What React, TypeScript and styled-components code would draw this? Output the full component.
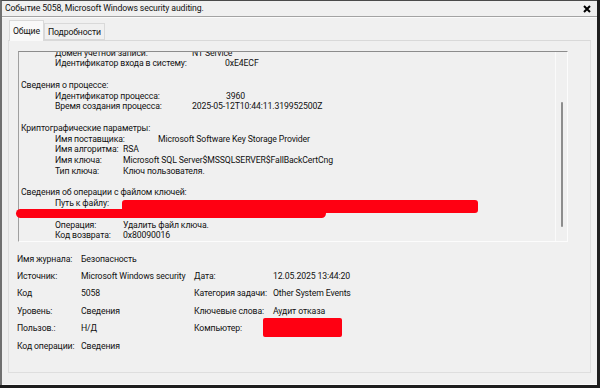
import React from "react";
import styled, { createGlobalStyle } from "styled-components";

const GlobalStyle = createGlobalStyle`
	html, body {
		margin: 0;
		padding: 0;
		background: #1e1e1e;
		overflow: hidden;
	}
	body {
		font-family: Roboto, "Noto Sans", "DejaVu Sans", sans-serif;
		font-size: 8.7px;
		letter-spacing: -0.12px;
		color: #111;
	}
`;

interface ItemProps {
	labelWidth?: number;
}

interface TabProps {
	active?: boolean;
}

interface MarkProps {
	x: number;
	y: number;
	w: number;
	h: number;
	r?: number;
}

// event log text inside the scrolling box
const logSections = [
	{
		title: "",
		items: [
			{ label: "Домен учетной записи:", value: "NT Service", width: 137 },
			{ label: "Идентификатор входа в систему:", value: "0xE4ECF", width: 170 },
		],
	},
	{
		title: "Сведения о процессе:",
		items: [
			{ label: "Идентификатор процесса:", value: "3960", width: 171 },
			{ label: "Время создания процесса:", value: "2025-05-12T10:44:11.319952500Z", width: 137 },
		],
	},
	{
		title: "Криптографические параметры:",
		items: [
			{ label: "Имя поставщика:", value: "Microsoft Software Key Storage Provider", width: 103 },
			{ label: "Имя алгоритма:", value: "RSA", width: 68 },
			{ label: "Имя ключа:", value: "Microsoft SQL Server$MSSQLSERVER$FallBackCertCng", width: 68 },
			{ label: "Тип ключа:", value: "Ключ пользователя.", width: 68 },
		],
	},
	{
		title: "Сведения об операции с файлом ключей:",
		items: [
			{ label: "Путь к файлу:", value: "", width: 68 },
			{ label: "", value: "", width: 68 },
			{ label: "Операция:", value: "Удалить файл ключа.", width: 68 },
			{ label: "Код возврата:", value: "0x80090016", width: 68 },
		],
	},
];

const fields = [
	["Имя журнала:", "Безопасность", "", ""],
	["Источник:", "Microsoft Windows security", "Дата:", "12.05.2025 13:44:20"],
	["Код", "5058", "Категория задачи:", "Other System Events"],
	["Уровень:", "Сведения", "Ключевые слова:", "Аудит отказа"],
	["Пользов.:", "Н/Д", "Компьютер:", ""],
	["Код операции:", "Сведения", "", ""],
];

export default function App() {
	return (
		<Screen>
			<GlobalStyle />
			<Window>
				<TitleBar>
					<TitleText>Событие 5058, Microsoft Windows security auditing.</TitleText>
					<CloseIcon width="8" height="8" viewBox="0 0 8 8">
						<path d="M1 1 L7 7 M7 1 L1 7" stroke="#000" strokeWidth="2" />
					</CloseIcon>
				</TitleBar>
				<Content>
					<TabStrip>
						<Tab active>Общие</Tab>
						<Tab>Подробности</Tab>
					</TabStrip>
					<Panel>
						<TextBox>
							<LogScroll>
								<LogText>
									{logSections.map((s, i) => (
										<Section key={i}>
											{s.title && <Line>{s.title}</Line>}
											{s.items.map((it, j) => (
												<Item key={j}>
													<ItemLabel labelWidth={it.width}>{it.label}</ItemLabel>
													<span>{it.value}</span>
												</Item>
											))}
										</Section>
									))}
								</LogText>
							</LogScroll>
							<ScrollTrack>
								<ScrollThumb />
							</ScrollTrack>
						</TextBox>
						<Fields>
							{fields.map((row, i) =>
								row.map((cell, j) => <FieldCell key={i + "-" + j}>{cell}</FieldCell>)
							)}
						</Fields>
					</Panel>
				</Content>
			</Window>
			{/* red redaction strokes */}
			<Mark x={122} y={200} w={356} h={13} r={3} />
			<Mark x={16} y={208.5} w={310} h={9.5} r={5} />
			<Mark x={263} y={318} w={79} h={19} r={2} />
		</Screen>
	);
}

const Screen = styled.div`
	position: relative;
	width: 600px;
	height: 388px;
	overflow: hidden;
`;

const Window = styled.div`
	box-sizing: border-box;
	width: 597px;
	height: 385px;
	background: #f0f0f0;
	border-left: 2px solid #707070;
	border-top: 1px solid #4a4a4a;
	display: flex;
	flex-direction: column;
`;

const TitleBar = styled.div`
	box-sizing: border-box;
	height: 16px;
	display: flex;
	align-items: center;
	justify-content: space-between;
	padding: 0 6px 0 3px;
	border-bottom: 1px solid #a3a3a3;
	box-shadow: 0 1px 0 #fbfbfb;
`;

const TitleText = styled.span`
	white-space: nowrap;
	line-height: 15px;
`;

const CloseIcon = styled.svg`
	display: block;
`;

const Content = styled.div`
	flex: 1;
	display: flex;
	flex-direction: column;
	padding: 3px 6px 11px 6px;
	border-bottom: 1px solid #fafafa;
`;

const TabStrip = styled.div`
	display: flex;
	align-items: flex-end;
	height: 20px;
	padding-left: 1px;
`;

const Tab = styled.div<TabProps>`
	box-sizing: border-box;
	height: ${(p) => (p.active ? "21px" : "17px")};
	margin-bottom: ${(p) => (p.active ? "-1px" : "0")};
	padding: 0 3px;
	display: flex;
	align-items: center;
	background: ${(p) => (p.active ? "#f9f9f9" : "#f0f0f0")};
	border: 1px solid #d9d9d9;
	border-bottom: ${(p) => (p.active ? "none" : "1px solid #d9d9d9")};
	white-space: nowrap;
	position: relative;
	z-index: ${(p) => (p.active ? 1 : 0)};
`;

const Panel = styled.div`
	box-sizing: border-box;
	flex: 1;
	border: 1px solid #dedede;
	border-top-color: #d9d9d9;
	background: #f0f0f0;
	padding-top: 10px;
	display: flex;
	flex-direction: column;
`;

const TextBox = styled.div`
	box-sizing: border-box;
	width: 550px;
	height: 191px;
	margin-left: 9px;
	display: flex;
	border-top: 1px solid #8c8c8c;
	border-left: 1px solid #a0a0a0;
	border-right: 1px solid #fcfcfc;
	border-bottom: 1px solid #fcfcfc;
`;

const LogScroll = styled.div`
	flex: 1;
	overflow: hidden;
`;

const LogText = styled.div`
	margin-top: -4.5px;
	padding-left: 2px;
	line-height: 10.75px;
	white-space: nowrap;
`;

const Section = styled.div`
	margin-bottom: 10.75px;
`;

const Line = styled.div`
	height: 10.75px;
`;

const Item = styled.div`
	display: flex;
	height: 10.75px;
	padding-left: 34px;
`;

const ItemLabel = styled.span<ItemProps>`
	flex-shrink: 0;
	width: ${(p) => p.labelWidth || 68}px;
`;

const ScrollTrack = styled.div`
	width: 11px;
	border-left: 1px solid #fafafa;
	display: flex;
	justify-content: center;
`;

const ScrollThumb = styled.div`
	width: 2px;
	height: 125px;
	margin-top: 50px;
	background: #8d8d8d;
	border-radius: 1px;
`;

const Fields = styled.div`
	display: grid;
	grid-template-columns: 64px 113px 79px 1fr;
	grid-auto-rows: 17.4px;
	align-items: center;
	margin-top: 8px;
	padding-left: 8px;
	white-space: nowrap;
`;

const FieldCell = styled.div``;

const Mark = styled.div<MarkProps>`
	position: absolute;
	left: ${(p) => p.x}px;
	top: ${(p) => p.y}px;
	width: ${(p) => p.w}px;
	height: ${(p) => p.h}px;
	border-radius: ${(p) => p.r || 2}px;
	background: #ff0012;
`;
